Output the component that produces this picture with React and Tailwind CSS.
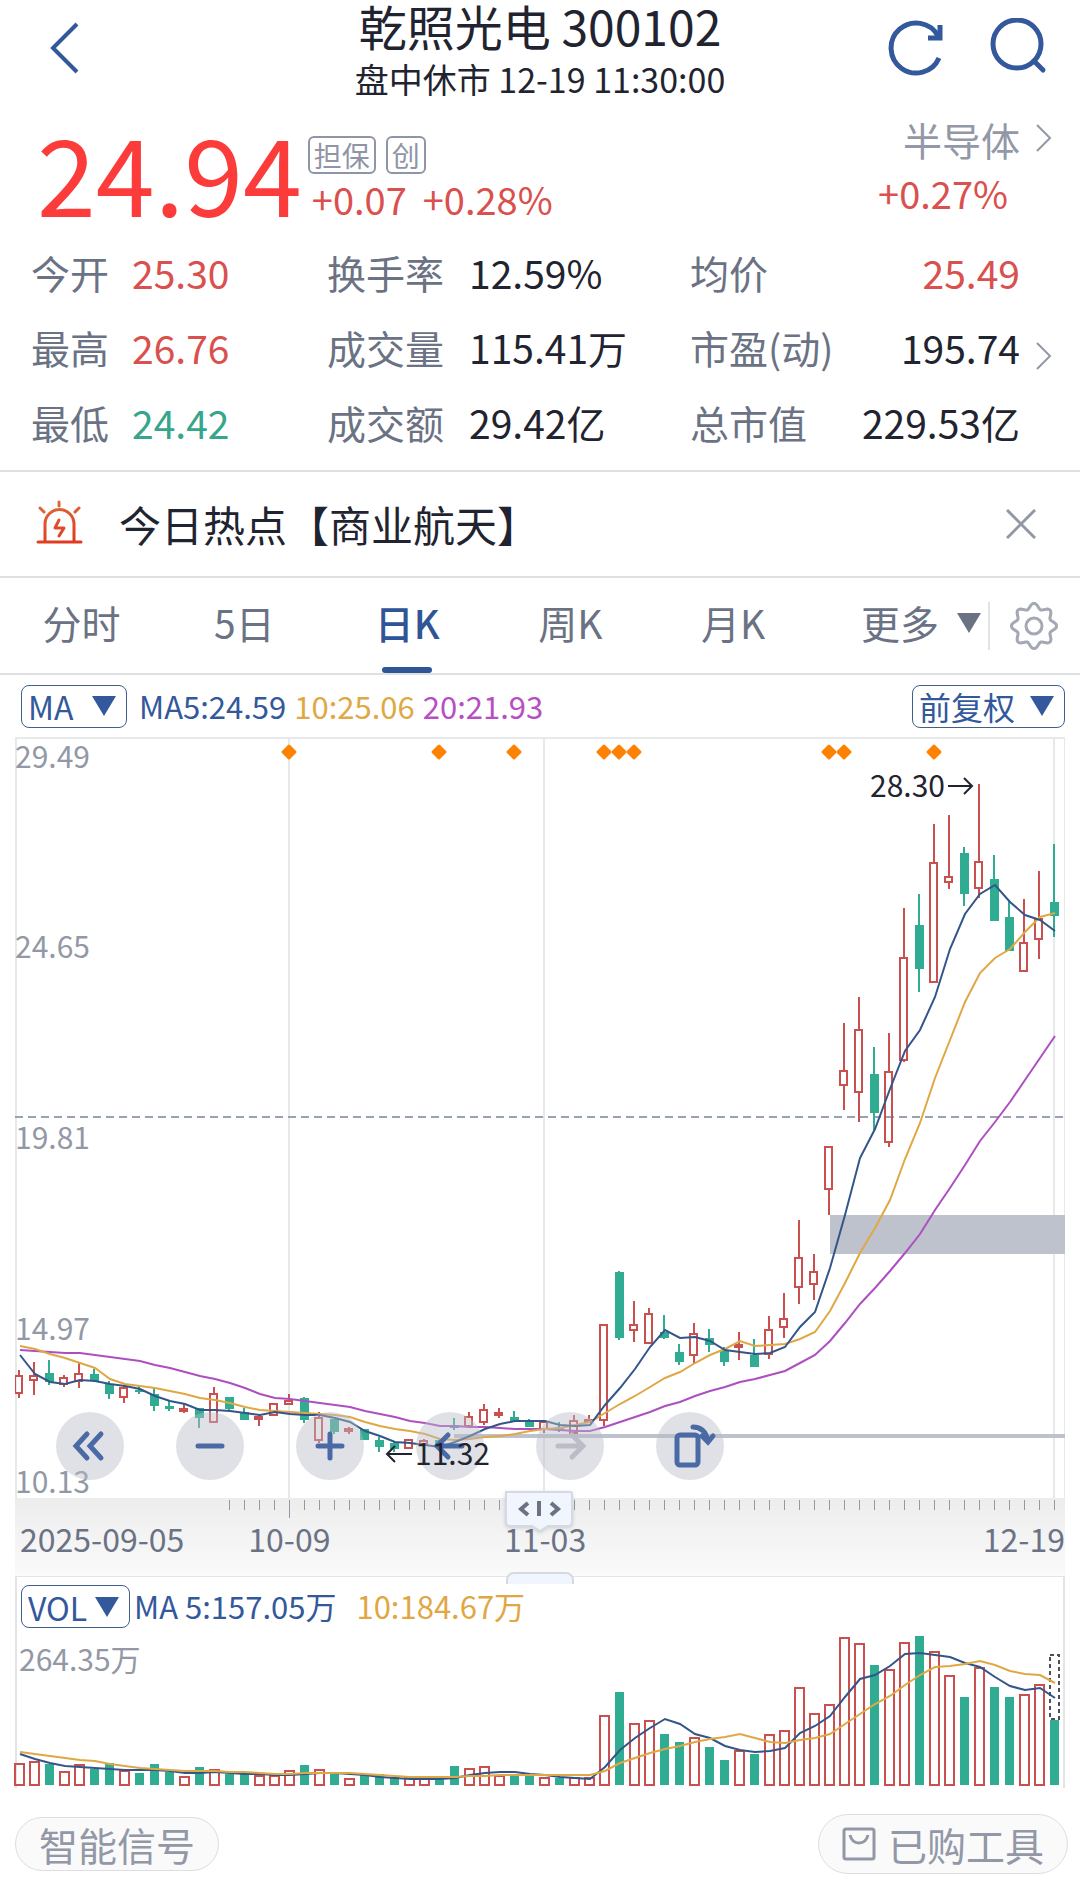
import { useState } from "react";

const STEP = 15;
const FIRST_X = 20;
const UP = "#c9504f";
const DOWN = "#30ac93";

// "u" = rising, "d" = falling; then wick top, body top, body bottom, wick bottom
const CANDLES = [
  ["u", 1370, 1376, 1393, 1398], ["u", 1362, 1376, 1380, 1395], ["d", 1360, 1373, 1382, 1385], ["u", 1375, 1378, 1384, 1387],
  ["u", 1363, 1374, 1381, 1388], ["d", 1369, 1374, 1381, 1382], ["d", 1381, 1384, 1394, 1399], ["u", 1386, 1388, 1397, 1403],
  ["d", 1385, 1390, 1392, 1394], ["d", 1388, 1394, 1406, 1411], ["d", 1400, 1406, 1409, 1411], ["u", 1404, 1409, 1411, 1413],
  ["d", 1408, 1408, 1418, 1428], ["u", 1387, 1394, 1422, 1423], ["d", 1397, 1397, 1409, 1410], ["d", 1408, 1412, 1420, 1420],
  ["u", 1415, 1417, 1419, 1426], ["u", 1403, 1404, 1415, 1416], ["u", 1394, 1401, 1404, 1404], ["d", 1397, 1398, 1420, 1423],
  ["u", 1412, 1418, 1440, 1443], ["d", 1419, 1419, 1432, 1434], ["u", 1427, 1429, 1431, 1434], ["d", 1429, 1429, 1440, 1440],
  ["d", 1437, 1440, 1447, 1452], ["d", 1441, 1443, 1449, 1452], ["u", 1439, 1440, 1448, 1449], ["u", 1439, 1441, 1444, 1448],
  ["d", 1439, 1440, 1446, 1447], ["d", 1418, 1426, 1428, 1430], ["u", 1412, 1417, 1426, 1428], ["u", 1404, 1410, 1422, 1425],
  ["u", 1408, 1413, 1415, 1418], ["d", 1411, 1417, 1422, 1422], ["d", 1419, 1422, 1427, 1427], ["u", 1421, 1422, 1429, 1433],
  ["d", 1422, 1427, 1429, 1432], ["u", 1415, 1421, 1433, 1433], ["u", 1415, 1420, 1422, 1423], ["u", 1324, 1325, 1420, 1426],
  ["d", 1271, 1272, 1338, 1340], ["u", 1301, 1325, 1330, 1342], ["u", 1308, 1314, 1343, 1343], ["d", 1315, 1332, 1338, 1339],
  ["d", 1344, 1352, 1362, 1365], ["u", 1323, 1334, 1355, 1363], ["d", 1329, 1338, 1345, 1352], ["d", 1347, 1350, 1362, 1366],
  ["u", 1332, 1345, 1347, 1360], ["d", 1339, 1355, 1367, 1367], ["u", 1316, 1330, 1354, 1359], ["u", 1293, 1319, 1327, 1338],
  ["u", 1220, 1258, 1287, 1304], ["u", 1254, 1272, 1284, 1300], ["u", 1147, 1147, 1189, 1215], ["u", 1023, 1071, 1085, 1110],
  ["u", 997, 1030, 1092, 1122], ["d", 1047, 1074, 1113, 1130], ["u", 1033, 1072, 1142, 1147], ["u", 908, 958, 1060, 1062],
  ["d", 894, 925, 969, 992], ["u", 824, 863, 982, 982], ["u", 815, 877, 882, 889], ["d", 847, 853, 894, 906],
  ["u", 784, 862, 888, 898], ["d", 855, 879, 921, 921], ["d", 900, 917, 951, 951], ["u", 899, 943, 971, 971],
  ["u", 871, 919, 939, 959], ["d", 844, 902, 916, 937],
];

const MA5 = [
  1355, 1374, 1382, 1384, 1380, 1381, 1384, 1386, 1389, 1396, 1401, 1404, 1410, 1410, 1411, 1413, 1415, 1412, 1414, 1415, 1415, 1418, 1422, 1431, 1436,
  1442, 1443, 1445, 1447, 1442, 1436, 1429, 1424, 1421, 1421, 1421, 1425, 1426, 1425, 1405, 1388, 1369, 1347, 1330, 1338, 1337, 1341, 1350, 1352, 1354,
  1353, 1347, 1327, 1312, 1268, 1215, 1158, 1129, 1089, 1051, 1030, 997, 949, 914, 894, 885, 902, 915, 920, 931,
];
const MA10 = [
  1346, 1349, 1354, 1358, 1363, 1368, 1379, 1384, 1386, 1388, 1391, 1394, 1398, 1400, 1403, 1407, 1410, 1411, 1412, 1413, 1414, 1415, 1417, 1422, 1426,
  1429, 1431, 1434, 1439, 1440, 1439, 1437, 1436, 1434, 1431, 1429, 1428, 1425, 1422, 1413, 1404, 1396, 1387, 1378, 1372, 1363, 1355, 1349, 1341, 1346,
  1345, 1344, 1339, 1332, 1311, 1283, 1253, 1228, 1200, 1159, 1123, 1078, 1040, 1002, 973, 958, 949, 932, 917, 913,
];
const MA20 = [
  1350, 1351, 1352, 1353, 1353, 1355, 1357, 1359, 1361, 1365, 1368, 1372, 1376, 1379, 1383, 1388, 1394, 1398, 1399, 1401, 1403, 1405, 1407, 1411, 1414,
  1417, 1421, 1423, 1426, 1426, 1427, 1427, 1428, 1429, 1429, 1429, 1430, 1431, 1431, 1427, 1422, 1417, 1412, 1406, 1402, 1396, 1391, 1387, 1382, 1379,
  1375, 1371, 1363, 1355, 1341, 1323, 1304, 1288, 1271, 1253, 1234, 1210, 1188, 1165, 1141, 1122, 1102, 1080, 1058, 1036,
];

const VOLUMES = [
  1763, 1761, 1764, 1771, 1764, 1769, 1763, 1770, 1773, 1764, 1772, 1776, 1767, 1769, 1774, 1774, 1775, 1775, 1770, 1765, 1769, 1774, 1778, 1775, 1774,
  1777, 1777, 1778, 1778, 1766, 1768, 1766, 1775, 1776, 1775, 1777, 1778, 1777, 1777, 1715, 1692, 1723, 1720, 1734, 1742, 1737, 1747, 1760, 1750, 1754,
  1734, 1730, 1687, 1713, 1704, 1637, 1643, 1665, 1669, 1642, 1636, 1651, 1675, 1697, 1667, 1687, 1697, 1694, 1684, 1720,
];
const VOL5 = [
  1754, 1759, 1763, 1766, 1767, 1768, 1769, 1770, 1770, 1770, 1771, 1773, 1773, 1772, 1773, 1774, 1774, 1775, 1775, 1774, 1773, 1773, 1774, 1775, 1777,
  1778, 1779, 1779, 1779, 1778, 1775, 1773, 1772, 1772, 1774, 1775, 1777, 1778, 1779, 1767, 1750, 1738, 1728, 1719, 1724, 1734, 1738, 1746, 1750, 1752,
  1751, 1748, 1733, 1726, 1716, 1697, 1679, 1675, 1666, 1654, 1653, 1655, 1657, 1663, 1667, 1677, 1686, 1690, 1688, 1698,
];
const VOL10 = [
  1752, 1754, 1756, 1758, 1760, 1761, 1764, 1766, 1768, 1769, 1770, 1771, 1771, 1771, 1772, 1772, 1773, 1774, 1774, 1773, 1773, 1773, 1773, 1774, 1775,
  1776, 1777, 1777, 1777, 1777, 1776, 1776, 1775, 1775, 1775, 1775, 1775, 1775, 1775, 1771, 1763, 1758, 1753, 1749, 1746, 1742, 1739, 1737, 1734, 1738,
  1742, 1743, 1740, 1738, 1734, 1724, 1714, 1704, 1696, 1685, 1675, 1667, 1666, 1664, 1661, 1665, 1671, 1674, 1675, 1683,
];

const EVENTS = [18, 28, 33, 39, 40, 41, 54, 55, 61];

const xAt = (i) => FIRST_X + i * STEP;
const toPoints = (ys) => ys.map((y, i) => `${xAt(i)},${y}`).join(" ");

// eight rounded teeth
const GEAR = Array.from({ length: 96 }, (_, i) => {
  const a = (i / 96) * Math.PI * 2;
  const r = 20 + 2.6 * Math.cos(8 * a);
  return `${(24 + r * Math.cos(a)).toFixed(1)},${(24 + r * Math.sin(a)).toFixed(1)}`;
}).join(" ");

const QUOTES = [
  ["今开", "25.30", "text-[#d9504e]", "换手率", "12.59%", "均价", "25.49", "text-[#d9504e]"],
  ["最高", "26.76", "text-[#d9504e]", "成交量", "115.41万", "市盈(动)", "195.74", "text-[#1f2430]"],
  ["最低", "24.42", "text-[#36a58c]", "成交额", "29.42亿", "总市值", "229.53亿", "text-[#1f2430]"],
];

function Triangle({ className }) {
  return (
    <svg viewBox="0 0 24 20" className={className} fill="currentColor" aria-hidden="true">
      <path d="M0 0h24L12 20z" />
    </svg>
  );
}

function Chevron({ className }) {
  return (
    <svg viewBox="0 0 16 28" className={className} fill="none" stroke="currentColor" strokeWidth="2" aria-hidden="true">
      <path d="M1 1l13 13L1 27" />
    </svg>
  );
}

function Header() {
  return (
    <header className="flex items-start justify-between px-8">
      <button type="button" aria-label="返回" className="mt-4 flex h-16 w-40 items-center pl-[17px]">
        <svg viewBox="0 0 30 52" className="h-[52px] w-[30px] text-[#33589b]" fill="none" stroke="currentColor" strokeWidth="4">
          <path d="M28 2L4 26l24 24" />
        </svg>
      </button>
      <div className="text-center text-[#1f2430]">
        <h1 className="text-[48px] leading-[50px]">乾照光电 300102</h1>
        <p className="text-[34px] leading-[58px]">盘中休市 12-19 11:30:00</p>
      </div>
      <div className="mt-4 flex h-16 w-40 items-center justify-end gap-10 text-[#33589b]">
        <button type="button" aria-label="刷新">
          <svg viewBox="0 0 60 60" className="size-[60px]" fill="none" stroke="currentColor" strokeWidth="5">
            <path d="M51 40A25 25 0 1 1 50 18" />
            <path d="M52 7v13H40" />
          </svg>
        </button>
        <button type="button" aria-label="搜索">
          <svg viewBox="0 0 60 60" className="size-[60px]" fill="none" stroke="currentColor" strokeWidth="5">
            <circle cx="29" cy="26" r="24" />
            <path d="M46 43l9 9" strokeLinecap="round" />
          </svg>
        </button>
      </div>
    </header>
  );
}

function Price() {
  return (
    <section className="flex h-[127px] justify-between pl-[37px] pr-7">
      <div className="flex">
        <strong className="text-[106px] leading-[126px] font-normal text-[#fb3c3b]">24.94</strong>
        <div className="pt-7 pl-[6px]">
          <div className="flex gap-[10px] text-[28px] leading-[34px] text-[#8f95a6]">
            <span className="rounded-md border-2 border-[#8f95a6] px-1">担保</span>
            <span className="rounded-md border-2 border-[#8f95a6] px-1">创</span>
          </div>
          <p className="flex gap-4 pl-1 text-[38px] leading-[50px] text-[#d9504e]">
            <span>+0.07</span>
            <span>+0.28%</span>
          </p>
        </div>
      </div>
      <a href="#sector" className="flex gap-4 text-[#9298a6]">
        <span className="pt-1 text-right text-[39px] leading-[54px]">
          <span className="block">半导体</span>
          <span className="mr-3 block text-[38px] text-[#d9504e]">+0.27%</span>
        </span>
        <Chevron className="mt-4 h-7 w-4" />
      </a>
    </section>
  );
}

function Quotes() {
  return (
    <section className="border-b-2 border-[#dfe0e2] pr-7 pb-[10px] pl-[31px] text-[39px] leading-[75px]">
      {QUOTES.map(([a, av, ac, b, bv, c, cv, cc]) => (
        <dl key={a} className="flex text-[#1f2430]">
          <dt className="w-[101px] text-[#6a7284]">{a}</dt>
          <dd className={`w-[195px] ${ac}`}>{av}</dd>
          <dt className="w-[142px] text-[#6a7284]">{b}</dt>
          <dd className="w-[221px]">{bv}</dd>
          <dt className="text-[#6a7284]">{c}</dt>
          <dd className={`flex flex-1 items-center justify-end gap-4 ${cc}`}>
            {cv}
            <Chevron className={c === "市盈(动)" ? "mt-4 h-7 w-4 text-[#9298a6]" : "invisible h-7 w-4"} />
          </dd>
        </dl>
      ))}
    </section>
  );
}

function HotTopic({ onClose }) {
  return (
    <section className="flex h-[106px] items-center border-b-2 border-[#dfe0e2] pr-8 pl-[35px] text-[#1f2430]">
      <svg viewBox="0 0 48 48" className="size-12" fill="none" stroke="url(#alarm)" strokeWidth="3" strokeLinecap="round" aria-hidden="true">
        <defs>
          <linearGradient id="alarm" gradientUnits="userSpaceOnUse" x1="0" y1="0" x2="10" y2="46">
            <stop offset="0" stopColor="#df7038" />
            <stop offset="1" stopColor="#e03a20" />
          </linearGradient>
        </defs>
        <path d="M3 42h43M10 42V24a14 14 0 0 1 29 0v18M24 2l.1 4M5 8l4 4M44 8l-4 4" />
        <path d="M24 20l-4 8h9l-5 8" strokeLinejoin="round" />
      </svg>
      <a href="#hot" className="ml-9 flex-1 text-[42px] leading-[60px]">今日热点【商业航天】</a>
      <button type="button" aria-label="关闭" onClick={onClose} className="text-[#9298a6]">
        <svg viewBox="0 0 30 30" className="mr-3 size-[30px]" fill="none" stroke="currentColor" strokeWidth="3">
          <path d="M1 1l28 28M29 1L1 29" />
        </svg>
      </button>
    </section>
  );
}

function Periods() {
  const [active, setActive] = useState("日K");
  return (
    <nav className="flex h-[97px] items-center border-b-2 border-[#dfe0e2] pr-[22px] text-[39px] text-[#6a7284]">
      {["分时", "5日", "日K", "周K", "月K"].map((p) => (
        <button
          key={p}
          type="button"
          onClick={() => setActive(p)}
          className={`relative h-full w-[15.4%] pb-[6px] ${p === active ? "font-medium text-[#2f5597]" : ""}`}
        >
          {p}
          {p === active && <span className="absolute bottom-0 left-1/2 h-[6px] w-[50px] -translate-x-1/2 rounded-full bg-[#2f5597]" />}
        </button>
      ))}
      <button type="button" className="flex flex-1 items-center justify-end gap-[18px] pr-[7px] pb-[6px]">
        更多
        <Triangle className="h-5 w-6" />
      </button>
      <button type="button" aria-label="设置" className="border-l-2 border-[#e2e3e6] pl-5">
        <svg viewBox="0 0 48 48" className="size-12" fill="none" stroke="#a3a8b4" strokeWidth="3" strokeLinejoin="round">
          <polygon points={GEAR} />
          <circle cx="24" cy="24" r="8" />
        </svg>
      </button>
    </nav>
  );
}

function Picker({ label, className }) {
  return (
    <button
      type="button"
      className={`flex h-[43px] items-center justify-between rounded-lg border border-[#3f5f8c] pr-[10px] pl-[6px] text-[32px] text-[#33589b] ${className}`}
    >
      {label}
      <Triangle className="h-5 w-6" />
    </button>
  );
}

function Tool({ label, children, muted }) {
  return (
    <button
      type="button"
      aria-label={label}
      className={`size-[68px] rounded-full bg-[#b9bcc8]/45 ${muted ? "text-[#babdc7]" : "text-[#4a6aa5]"}`}
    >
      <svg viewBox="0 0 68 68" className="size-[68px]" fill="none" stroke="currentColor" strokeWidth="5" strokeLinecap="round">
        {children}
      </svg>
    </button>
  );
}

function KLine() {
  return (
    <div className="relative mx-[15px]">
      <svg viewBox="15 737 1050 761" className="block w-full" fill="none">
        <path d="M15 738h1050v760" stroke="#e6e8ea" strokeWidth="2" />
        <path d="M16 737v761M289 737v761M544 737v761M1054 737v761" stroke="#e6e8ea" strokeWidth="2" />
        <path d="M15 1117h1050" stroke="#98a2b3" strokeWidth="2" strokeDasharray="8 5" />
        <rect x="830" y="1215" width="235" height="39" fill="#bdc2cc" />
        <path d="M454 1436h611" stroke="#bdc2cc" strokeWidth="4" />
        {EVENTS.map((i) => (
          <path key={i} d={`M${xAt(i) - 7} 752l6-6 6 6-6 6z`} fill="#fd8204" stroke="#fd8204" strokeWidth="3" strokeLinejoin="round" />
        ))}
        {CANDLES.map(([dir, high, top, bottom, low], i) => {
          const x = xAt(i) - 1;
          return dir === "u" ? (
            <g key={i} stroke={UP} strokeWidth="2">
              <path d={`M${x} ${high}V${top}M${x} ${bottom}V${low}`} />
              <rect x={x - 4} y={top} width="7" height={bottom - top} />
            </g>
          ) : (
            <g key={i} fill={DOWN}>
              <rect x={x - 1} y={high} width="2" height={low - high} />
              <rect x={x - 4} y={top} width="9" height={bottom - top} />
            </g>
          );
        })}
        <g strokeWidth="2">
          <polyline points={toPoints(MA20)} stroke="#ae4fc0" />
          <polyline points={toPoints(MA10)} stroke="#dfa845" />
          <polyline points={toPoints(MA5)} stroke="#34558a" />
        </g>
        <g fill="#9298a6" fontSize="30">
          <text x="15" y="768">29.49</text>
          <text x="15" y="958">24.65</text>
          <text x="15" y="1149">19.81</text>
          <text x="15" y="1340">14.97</text>
          <text x="15" y="1493">10.13</text>
        </g>
        <text x="870" y="797" fill="#1f2430" fontSize="30">28.30</text>
        <path d="M948 786h24M964 778l8 8-8 8M412 1454h-24M395 1446l-8 8 8 8" stroke="#1f2430" strokeWidth="2" />
      </svg>
      <div className="absolute bottom-[18px] left-[41px] flex gap-[52px]">
        <Tool label="最早"><path d="M31 22L20 34l11 12M45 22L34 34l11 12" /></Tool>
        <Tool label="缩小"><path d="M22 34h24" /></Tool>
        <Tool label="放大"><path d="M22 34h24M34 22v24" /></Tool>
        <Tool label="左移"><path d="M46 34H22M32 23L21 34l11 11" /></Tool>
        <Tool label="右移" muted><path d="M22 34h24M36 23l11 11-11 11" /></Tool>
        <Tool label="横屏">
          <rect x="21" y="23" width="21" height="30" rx="3" />
          <path d="M37 15q12 0 15 14M46 24l6 6 5-6" />
        </Tool>
      </div>
      <span className="pointer-events-none absolute bottom-[31px] left-[400px] text-[30px] leading-none text-[#1f2430]">11.32</span>
    </div>
  );
}

function Timeline() {
  return (
    <div className="relative mx-[15px] h-[78px] bg-linear-to-b from-[#ededee] to-[#fafafb] text-[32px] text-[#6a7284]">
      <svg viewBox="15 0 1050 20" className="block w-full" fill="none" stroke="#9298a6" strokeWidth="1">
        {CANDLES.slice(14).map((_, i) => (
          <path key={i} d={`M${xAt(i + 14) - 0.5} 2v${i === 4 ? 18 : 10}`} />
        ))}
      </svg>
      <div className="flex justify-between pl-[5px] leading-[40px]">
        <span className="flex gap-[64px]">
          <span>2025-09-05</span>
          <span>10-09</span>
        </span>
        <span>12-19</span>
      </div>
      <span className="absolute top-5 left-1/2 -translate-x-9 leading-[40px]">11-03</span>
      <button type="button" aria-label="拖动" className="absolute -top-2 left-1/2 -translate-x-1/2">
        <svg viewBox="0 0 72 44" className="h-11 w-[72px] drop-shadow" fill="#f1f5fd" stroke="#d4d9e4" strokeWidth="2">
          <path d="M2 2h64q2 0 2 2v28q0 4-4 4H44l-8 5-8-5H6q-4 0-4-4V2z" />
          <path d="M24 13l-7 6 7 6M35 11v15M47 13l7 6-7 6" fill="none" stroke="#6a7284" strokeWidth="4" />
        </svg>
      </button>
      <span className="absolute -bottom-2 left-1/2 h-3 w-[68px] -translate-x-1/2 rounded-t-lg border-2 border-b-0 border-[#d4d9e4] bg-[#f1f5fd]" />
    </div>
  );
}

function Volume() {
  return (
    <section className="mx-[15px] border-x-2 border-t border-[#e2e4e6]">
      <div className="flex h-[55px] items-center gap-1 pt-1 pl-1 text-[31px]">
        <Picker label="VOL" className="w-[109px]" />
        <span className="text-[#33589b]">MA 5:157.05万</span>
        <span className="ml-4 text-[#dfa845]">10:184.67万</span>
      </div>
      <svg viewBox="17 1632 1046 156" className="block w-full overflow-visible" fill="none">
        <text x="19" y="1671" fill="#9298a6" fontSize="30">264.35万</text>
        {VOLUMES.map((top, i) =>
          CANDLES[i][0] === "u" ? (
            <rect key={i} x={xAt(i) - 5} y={top + 1} width="9" height={1784 - top} stroke={UP} strokeWidth="2" />
          ) : (
            <rect key={i} x={xAt(i) - 5} y={top} width="9" height={1785 - top} fill={DOWN} />
          )
        )}
        <rect x="1050" y="1655" width="9" height="64" stroke="#4b4f58" strokeWidth="2" strokeDasharray="4 3" />
        <polyline points={toPoints(VOL5)} stroke="#34558a" strokeWidth="2" />
        <polyline points={toPoints(VOL10)} stroke="#dfa845" strokeWidth="2" />
      </svg>
    </section>
  );
}

export default function App() {
  const [showHot, setShowHot] = useState(true);
  return (
    <main className="min-h-screen bg-white font-['Noto_Sans_CJK_SC',sans-serif]">
      <Header />
      <Price />
      <Quotes />
      {showHot && <HotTopic onClose={() => setShowHot(false)} />}
      <Periods />
      <div className="flex h-[62px] items-center gap-3 pr-[15px] pl-[21px] text-[31px]">
        <Picker label="MA" className="w-[106px]" />
        <p className="flex flex-1 gap-2">
          <span className="text-[#33589b]">MA5:24.59</span>
          <span className="text-[#dfa845]">10:25.06</span>
          <span className="text-[#b64fc4]">20:21.93</span>
        </p>
        <Picker label="前复权" className="w-[153px]" />
      </div>
      <KLine />
      <Timeline />
      <Volume />
      <footer className="flex items-center justify-between pt-[26px] pr-3 pl-[15px] text-[39px] text-[#9298a6]">
        <button type="button" className="h-[54px] rounded-full border border-[#dcdee2] bg-[#fafafb] px-[23px] leading-none">智能信号</button>
        <button type="button" className="flex h-[60px] items-center gap-3 rounded-full border border-[#dcdee2] bg-[#fafafb] px-[23px] leading-none">
          <svg viewBox="0 0 34 34" className="size-[34px]" fill="none" stroke="currentColor" strokeWidth="3">
            <rect x="2" y="2" width="30" height="30" rx="2" />
            <path d="M8 8q2 8 9 8t9-8" />
          </svg>
          已购工具
        </button>
      </footer>
    </main>
  );
}
